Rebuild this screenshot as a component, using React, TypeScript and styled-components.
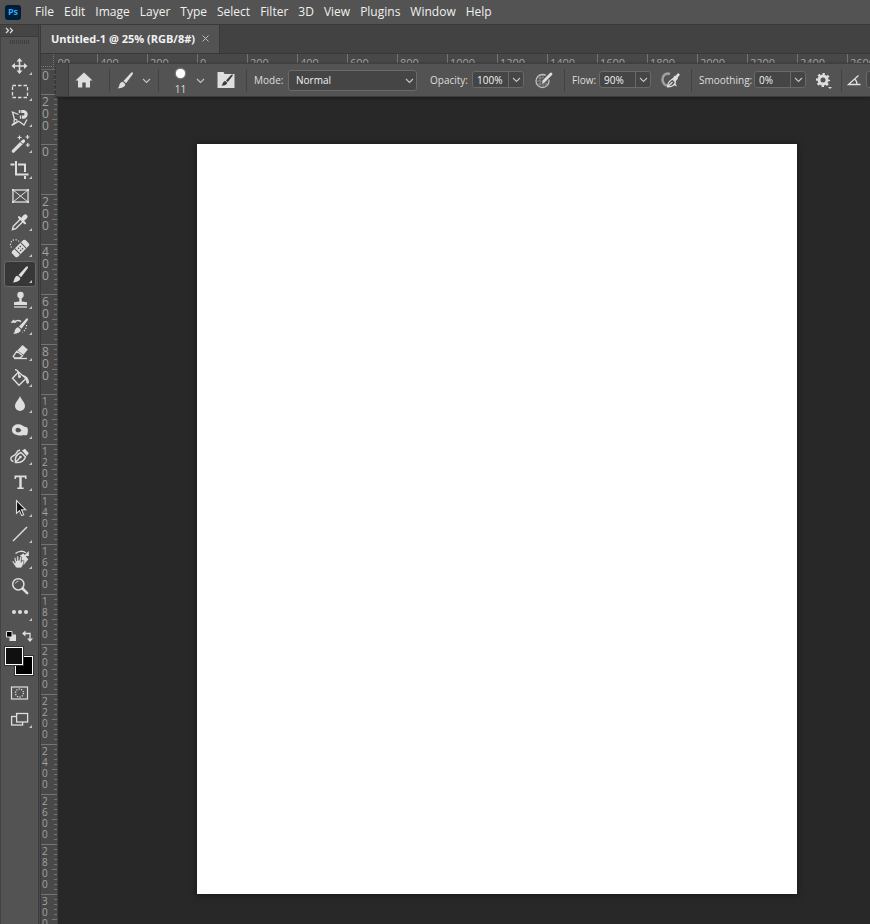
import React from "react";
import styled, { createGlobalStyle } from "styled-components";

const GlobalStyle = createGlobalStyle`
  *, *::before, *::after { box-sizing: border-box; }
  body {
    margin: 0;
    background: #282828;
    color: #e6e6e6;
    font-family: "Open Sans", "Noto Sans", sans-serif;
    font-size: 12px;
  }
  button, input, select { font: inherit; color: inherit; margin: 0; }
  button { background: none; border: 0; padding: 0; cursor: pointer; }
  svg { display: block; flex: none; }
`;

const Page = styled.div`
  display: flex;
  flex-direction: column;
  height: 100vh;
  overflow: hidden;
`;

/* ---------- menu bar ---------- */

const MenuBar = styled.header`
  display: flex;
  align-items: center;
  height: 25px;
  flex: none;
  padding-left: 5px;
  background: #535353;
  border-bottom: 1px solid #393939;
`;

const Logo = styled.span`
  width: 16px;
  height: 15px;
  margin-right: 9px;
  border-radius: 3px;
  background: #001e36;
  color: #31a8ff;
  font-size: 9px;
  line-height: 14px;
  font-weight: 700;
  text-align: center;
`;

const MenuList = styled.nav`
  display: flex;
`;

const MenuItem = styled.button`
  padding: 0 5px;
  line-height: 22px;
  color: #f0f0f0;
`;

/* ---------- frame ---------- */

const Body = styled.div`
  display: flex;
  flex: 1;
  min-height: 0;
`;

const ToolPanel = styled.aside`
  display: flex;
  flex-direction: column;
  flex: none;
  width: 39px;
  background: #535353;
  border-left: 1px solid #424242;
  border-right: 1px solid #3a3a3a;
`;

const PanelHeader = styled.button`
  height: 12px;
  flex: none;
  padding-left: 4px;
  background: #454545;
  border-bottom: 1px solid #3a3a3a;
`;

const Grip = styled.div`
  width: 20px;
  height: 4px;
  margin: 3px 0 9px 9px;
  flex: none;
  background: repeating-linear-gradient(90deg, #3f3f3f 0 1px, transparent 1px 2px);
`;

const ToolList = styled.div`
  display: flex;
  flex-direction: column;
  flex: none;
  padding-left: 3px;
`;

const ToolButton = styled.button<{ $active?: boolean; $flyout?: boolean }>`
  position: relative;
  display: flex;
  align-items: center;
  justify-content: center;
  width: 32px;
  height: 26px;
  border: 1px solid ${(p) => (p.$active ? "#686868" : "transparent")};
  border-radius: 3px;
  background: ${(p) => (p.$active ? "#373737" : "transparent")};
  color: #dedede;
  &::after {
    content: "";
    display: ${(p) => (p.$flyout ? "block" : "none")};
    position: absolute;
    right: 3px;
    bottom: 3px;
    border-left: 3px solid transparent;
    border-bottom: 3px solid #c4c4c4;
  }
`;

const ColorArea = styled.div`
  display: flex;
  flex-direction: column;
  padding: 3px 0 0 4px;
  color: #dedede;
`;

const ColorShortcuts = styled.div`
  display: flex;
  gap: 5px;
  height: 15px;
`;

const Swatches = styled.div`
  display: grid;
  grid-template-columns: 10px 8px 10px;
  grid-template-rows: 9px 9px 10px;
  margin-top: 4px;
`;

const Swatch = styled.button<{ $front?: boolean }>`
  grid-area: ${(p) => (p.$front ? "1 / 1 / 3 / 3" : "2 / 2 / 4 / 4")};
  z-index: ${(p) => (p.$front ? 1 : 0)};
  background: ${(p) => (p.$front ? "#0e110e" : "#000")};
  border: 1px solid #fff;
  outline: 1px solid #333;
`;

const ModeTools = styled(ToolList)`
  margin-top: 5px;
`;

const Gutter = styled.div`
  width: 2px;
  flex: none;
  background: #4a4a4a;
  border-right: 1px solid #3a3a3a;
`;

const Main = styled.main`
  display: flex;
  flex-direction: column;
  flex: 1;
  min-width: 0;
`;

const TabBar = styled.div`
  display: flex;
  height: 29px;
  flex: none;
  background: #424242;
  border-bottom: 1px solid #383838;
`;

const Tab = styled.div`
  display: flex;
  align-items: center;
  gap: 6px;
  padding: 0 9px 2px 10px;
  background: #535353;
  border-right: 1px solid #383838;
  color: #f2f2f2;
  font-size: 11px;
  font-weight: 700;
  white-space: nowrap;
`;

/* ---------- rulers ---------- */

const Workspace = styled.div`
  position: relative;
  display: grid;
  grid-template-columns: 17px minmax(0, 1fr);
  grid-template-rows: 16px minmax(0, 1fr);
  flex: 1;
  min-height: 0;
  background: #282828;
`;

const RulerCorner = styled.div`
  background:
    linear-gradient(#666, #666) 0 15px / 100% 1px no-repeat,
    repeating-linear-gradient(90deg, #777 0 1px, transparent 1px 2px) 0 12px / 100% 1px no-repeat,
    repeating-linear-gradient(#777 0 1px, transparent 1px 2px) 12px 0 / 1px 100% no-repeat,
    #484848;
`;

const TopRuler = styled.div`
  display: flex;
  overflow: hidden;
  background: #484848;
`;

const TopMark = styled.div<{ $first?: boolean }>`
  flex: none;
  display: flex;
  justify-content: ${(p) => (p.$first ? "flex-end" : "flex-start")};
  width: ${(p) => (p.$first ? 39 : 50)}px;
  padding-left: 2px;
  padding-right: ${(p) => (p.$first ? 27 : 0)}px;
  border-left: ${(p) => (p.$first ? 0 : 1)}px solid #747474;
  color: #a2a2a2;
  font-size: 11px;
  line-height: 17px;
`;

const SideRuler = styled.div`
  display: flex;
  flex-direction: column;
  overflow: hidden;
  background: #484848;
  border-right: 1px solid #404040;
`;

const SideMark = styled.div<{ $small?: boolean; $first?: boolean }>`
  flex: none;
  display: flex;
  flex-direction: column;
  justify-content: ${(p) => (p.$first ? "flex-end" : "flex-start")};
  height: ${(p) => (p.$first ? 24 : 50)}px;
  padding: ${(p) => (p.$first ? "0 0 12px 1px" : "2px 0 0 1px")};
  color: #a2a2a2;
  font-size: ${(p) => (p.$small ? 10 : 12)}px;
  line-height: ${(p) => (p.$small ? 11 : 12)}px;
  background:
    linear-gradient(#747474, #747474) 0 0 / ${(p) => (p.$first ? 0 : 100)}% 1px no-repeat,
    linear-gradient(#747474, #747474) 11px calc(100% - 24px) / 5px 1px no-repeat,
    repeating-linear-gradient(0deg, transparent 0 4px, #747474 4px 5px) 13px 100% / 3px 100% no-repeat;
`;

/* ---------- canvas ---------- */

const CanvasArea = styled.div`
  overflow: hidden;
  padding: 74px 73px 30px 139px;
`;

const Paper = styled.div`
  aspect-ratio: 4 / 5;
  background: #fff;
  box-shadow: 0 1px 6px 1px #1a1a1a;
`;

/* ---------- options bar, floats over the rulers ---------- */

const OptionsBar = styled.div`
  position: absolute;
  top: 9px;
  left: 15px;
  right: 0;
  display: flex;
  align-items: center;
  height: 34px;
  overflow: hidden;
  background: #535353;
  border-top: 1px solid #404040;
  border-bottom: 1px solid #3a3a3a;
  border-radius: 3px 0 0 3px;
  box-shadow: 0 1px 3px #1c1c1c;
  font-size: 10px;
  color: #dedede;
  & > * { flex: none; }
`;

const BarHandle = styled.div`
  width: 13px;
  height: 100%;
  background: #484848;
  border-right: 1px solid #3c3c3c;
`;

const Divider = styled.div`
  width: 1px;
  height: 23px;
  background: #424242;
`;

const BarButton = styled.button<{ $w: number }>`
  display: flex;
  align-items: center;
  justify-content: center;
  width: ${(p) => p.$w}px;
  height: 28px;
`;

const HomeButton = styled(BarButton)`
  margin-right: 10px;
`;

const BrushButton = styled(BarButton)`
  gap: 5px;
  padding-right: 4px;
`;

const BrushPreset = styled.button`
  display: flex;
  flex-direction: column;
  align-items: center;
  gap: 6px;
  width: 37px;
  padding: 3px 0 0 6px;
  line-height: 11px;
`;

const BrushDot = styled.span`
  width: 9px;
  height: 9px;
  border-radius: 50%;
  background: #fff;
  box-shadow: 0 0 2px #fff;
`;

const Label = styled.label<{ $w: number }>`
  width: ${(p) => p.$w}px;
  padding-left: 7px;
  white-space: nowrap;
`;

const SelectBox = styled.div`
  display: grid;
  align-items: center;
  width: 129px;
  height: 21px;
  margin-right: 6px;
  border: 1px solid #696969;
  border-radius: 3px;
  background: #454545;
  & > * { grid-area: 1 / 1; }
  & > svg { justify-self: end; margin-right: 2px; pointer-events: none; }
`;

const Select = styled.select`
  width: 100%;
  padding: 0 7px;
  appearance: none;
  border: 0;
  background: transparent;
  color: #f2f2f2;
`;

const Combo = styled.div`
  display: flex;
  width: 52px;
  height: 17px;
  margin-bottom: 1px;
  border: 1px solid #696969;
  border-radius: 3px;
  background: #454545;
`;

const ComboInput = styled.input`
  flex: 1;
  min-width: 0;
  padding: 0 0 0 4px;
  border: 0;
  background: transparent;
  color: #f5f5f5;
`;

const ComboArrow = styled.button`
  display: flex;
  align-items: center;
  justify-content: center;
  width: 15px;
  border-left: 1px solid #696969;
`;

/* ---------- icons ---------- */

const Icon = ({ children, size = 24, box = 24 }: { children: React.ReactNode; size?: number; box?: number }) => (
  <svg width={size} height={size} viewBox={`0 0 ${box} ${box}`} fill="none" stroke="none" aria-hidden="true">
    {children}
  </svg>
);

const Chevron = () => (
  <svg width="9" height="9" viewBox="0 0 9 9" fill="none" stroke="#c4c4c4" strokeWidth="1.1" aria-hidden="true">
    <path d="M1 3l3.500 3.500L8 3" />
  </svg>
);

const F = "currentColor";

const brushShape = (
  <>
    <path d="M19.600 4.400c.7.500.4 1.300-.2 2.300L13 15.200 10.500 13l7.400-8c.6-.7 1.200-1 1.700-.6z" fill={F} />
    <path d="M9.700 13.700l2.500 2.200c.2 2.600-2.700 4.400-7.700 4.300 1.700-.8 1.500-2 1.900-3.400.5-1.700 1.700-2.900 3.300-3.100z" fill={F} />
  </>
);

const icons: Record<string, React.ReactNode> = {
  move: (
    <>
      <path d="M11.500 6v12M5.500 12h12" stroke={F} strokeWidth="1.500" />
      <path d="M11.500 4l3 3.500h-6zM11.500 20l3-3.500h-6zM3.500 12L7 9v6zM19.500 12L16 9v6z" fill={F} />
    </>
  ),
  marquee: <rect x="4.500" y="5.500" width="15" height="12" stroke={F} strokeDasharray="3.500 2" strokeWidth="1.300" />,
  lasso: (
    <>
      <path d="M10.500 8.500L4.500 6l2.300 8.500M6.500 16.500L3.800 19.500l7-4.200 5.200 3.800 3-5.600" stroke={F} strokeWidth="1.300" />
      <circle cx="7.500" cy="15" r="1.600" stroke={F} strokeWidth="1.100" />
      <path d="M10.800 5.500h4.500a2.800 2.800 0 010 5.600h-3.500" stroke={F} strokeWidth="3.200" />
      <path d="M12.800 3.500v4M13.500 9v4" stroke="#535353" strokeWidth=".8" />
    </>
  ),
  wand: (
    <>
      <path d="M5.300 19.200l7.700-7.700" stroke={F} strokeWidth="3.200" strokeLinecap="round" />
      <path d="M13.200 11.300l2.300-2.300" stroke={F} strokeWidth="3.200" strokeLinecap="round" />
      <path d="M12.400 9.800l2.300 2.300" stroke="#535353" strokeWidth="1" />
      <path d="M11.500 3.500v4M9.500 5.500h4M19.500 3v4M17.500 5h4M19.800 11v4M17.800 13h4" stroke={F} strokeWidth="1.200" />
    </>
  ),
  crop: (
    <>
      <path d="M8 3v13.500h12.500" stroke={F} strokeWidth="2" />
      <path d="M2.500 6.500h4M10 6.500h7v7.500M17 18v3" stroke={F} strokeWidth="2" />
    </>
  ),
  frame: (
    <>
      <rect x="5" y="6" width="15" height="12" stroke={F} strokeWidth="1.300" />
      <path d="M5 6l15 12M20 6L5 18" stroke={F} />
      <path d="M4 5h2v2H4zM19 5h2v2h-2zM4 17h2v2H4zM19 17h2v2h-2z" fill={F} />
    </>
  ),
  eyedropper: (
    <>
      <path d="M12.500 9l-7 7c-.6.600-.4 1.600-1 3.500 2-.6 2.700-.4 3.400-1L15 11.500" stroke={F} strokeWidth="1.400" />
      <path d="M15 9l2.300-2.300" stroke={F} strokeWidth="4.500" strokeLinecap="round" />
      <path d="M11 7.200l6 6" stroke={F} strokeWidth="2.200" strokeLinecap="round" />
    </>
  ),
  healing: (
    <>
      <g transform="rotate(-45 12.500 12.500)">
        <rect x="3" y="8.500" width="19" height="8" rx="2" fill={F} />
        <path d="M8.200 8.500v8M16.800 8.500v8" stroke="#535353" />
        <path d="M10.500 11h4M10.500 14h4" stroke="#535353" strokeWidth="1.400" strokeDasharray="1.400 1.200" />
      </g>
      <path d="M3.500 11.500a4.500 4.500 0 017.500-6" stroke={F} strokeWidth="1.200" strokeDasharray="1.200 1.500" />
    </>
  ),
  brush: brushShape,
  stamp: (
    <>
      <circle cx="12.500" cy="7" r="3.200" fill={F} />
      <path d="M11.300 9h2.400v4.500l5.300.8V17H6v-2.700l5.300-.8z" fill={F} />
      <path d="M6 19h13" stroke={F} strokeWidth="1.300" />
    </>
  ),
  history: (
    <>
      <path d="M19.600 4.400c.7.500.4 1.300-.2 2.300L13.500 14.700 11 12.500l7-7.500c.5-.7 1.200-1 1.600-.6z" fill={F} />
      <path d="M10.200 13.200l2.500 2.200c.2 2.600-2.700 4.400-7.700 4.300 1.700-.8 1.500-2 1.900-3.400.5-1.700 1.700-2.900 3.300-3.100z" fill={F} />
      <path d="M6 8.500c1-2 4-2.500 7-1" stroke={F} strokeWidth="1.500" />
      <path d="M2.500 8.800h6L5.500 5.500z" fill={F} />
      <path d="M18.500 11c0 3-1.500 5.500-4 7.500" stroke={F} strokeWidth="1.200" strokeDasharray="1.200 1.600" />
    </>
  ),
  eraser: (
    <>
      <path d="M14.500 5l5.300 4.500-4.300 5.300-6.200-4.300z" fill={F} />
      <path d="M8.700 11.300l5.800 4.200-2.400 2.500H7l-1.800-1.500z" stroke={F} strokeWidth="1.300" />
      <path d="M6 18.500h13" stroke={F} strokeWidth="1.300" />
    </>
  ),
  bucket: (
    <>
      <path d="M10.500 6l7.500 6.500-7 6.800-6.500-7z" stroke={F} strokeWidth="1.400" />
      <path d="M7 3.800c2-.4 3.500 1.500 4 6.200" stroke={F} strokeWidth="1.300" />
      <circle cx="11.500" cy="10.500" r="1.500" fill={F} />
      <path d="M14.500 9c3.700.3 6.500 3.500 6.500 7.500 0 1.500-2.700 1.500-2.700 0 0-1.500-.3-2.500-1-3.500z" fill={F} />
    </>
  ),
  drop: <path d="M12 4c1.500 3.800 5 6.600 5 10a5 5 0 01-10 0c0-3.400 3.500-6.200 5-10z" fill={F} />,
  sponge: (
    <path
      fillRule="evenodd"
      d="M4 12c0-3.800 3-5.700 6.500-5.700 2.500 0 4 1.200 5.500 2.200l3.300 1c1 2.300.8 5.300-.3 7.500-1.200.5-2.300.2-3.300 0-2 .7-4 .7-6 .2C6.300 16.400 4 15 4 12zm3.500 0c0 1.500 1.200 2.400 2.500 2.400s2.300-1 3.500-2c-1-1.500-2.200-2.700-3.500-2.700S7.500 10.600 7.500 12z"
      fill={F}
    />
  ),
  pen: (
    <>
      <path d="M7.500 18.500c-.7-4.500 1.200-8.500 5.500-10l4.500 4.500c-1.500 4-5.300 6-10 5.500zM7.500 18.500l5-5.500" stroke={F} strokeWidth="1.400" />
      <circle cx="12.500" cy="13" r="1.300" fill={F} />
      <path d="M14 6.500l3-1.800 3.800 4.500-2 2.800z" fill={F} />
      <path d="M5.500 17.500c-3-.7-3.500-3.500-1.500-5 2-1.300 3.300-1 4.200-3.200.7-2 2.300-3 3.800-3.300" stroke={F} strokeWidth="1.400" />
    </>
  ),
  text: (
    <path d="M6.500 5.500h12v3.500h-1.300l-.5-1.700h-3v10.200h2v1.500H9.300v-1.500h2V7.300h-3L7.800 9H6.500z" fill={F} />
  ),
  arrow: <path d="M8.500 4.500v12.800l3-2.700 2.200 5 2-.9-2.200-4.900h4.200z" fill="#111" stroke={F} strokeWidth="1.100" />,
  line: <path d="M5 19L19 5" stroke={F} strokeWidth="1.400" />,
  hand: (
    <>
      <path d="M12 7.500l3.500-2 4.800 5.800-4.800 6z" fill={F} />
      <path
        d="M8.500 20c-1.500-1.500-3-4.200-4.500-6.500.3-1.200 1.500-.9 2 0l1.200 1.500L6 10c.2-1.200 1.500-1 1.800 0l.9 3V8.800c.2-1.200 1.700-1.200 1.900 0l.3 3.700 1-3.500c.4-1 1.700-.7 1.700.3l-.5 5 1.300-1.700c.8-.8 1.700-.3 1.500.8-.4 2.800-1 4.600-2.700 6.600z"
        fill={F}
        stroke="#535353"
        strokeWidth=".7"
      />
      <path d="M7.500 5.500c3-3 7.500-2.700 10.500-.7" stroke={F} strokeWidth="1.300" />
      <path d="M20.800 3v5h-5z" fill={F} />
    </>
  ),
  zoom: (
    <>
      <circle cx="10.300" cy="10.300" r="5.600" stroke={F} strokeWidth="1.500" />
      <path d="M14.500 14.500l4.700 4.700" stroke={F} strokeWidth="2.500" strokeLinecap="round" />
      <path d="M7.500 9.500a3 3 0 013-2.300" stroke={F} strokeWidth=".8" />
    </>
  ),
  dots: (
    <>
      <circle cx="6" cy="12" r="2" fill={F} />
      <circle cx="12" cy="12" r="2" fill={F} />
      <circle cx="18" cy="12" r="2" fill={F} />
    </>
  ),
  mask: (
    <>
      <rect x="3.500" y="6" width="16" height="12" stroke={F} strokeWidth="1.200" />
      <circle cx="11.500" cy="12" r="4" stroke={F} strokeWidth="1.300" strokeDasharray="1.200 1.300" />
    </>
  ),
  screen: (
    <>
      <rect x="3.600" y="9.500" width="11" height="8.500" stroke={F} strokeWidth="1.300" />
      <rect x="8.600" y="6.500" width="11" height="8.500" fill="#535353" stroke={F} strokeWidth="1.300" />
    </>
  ),
};

const tools: { id: string; label: string; flyout?: boolean }[] = [
  { id: "move", label: "Move", flyout: true },
  { id: "marquee", label: "Rectangular marquee", flyout: true },
  { id: "lasso", label: "Magnetic lasso", flyout: true },
  { id: "wand", label: "Magic wand", flyout: true },
  { id: "crop", label: "Crop", flyout: true },
  { id: "frame", label: "Frame" },
  { id: "eyedropper", label: "Eyedropper", flyout: true },
  { id: "healing", label: "Spot healing brush", flyout: true },
  { id: "brush", label: "Brush", flyout: true },
  { id: "stamp", label: "Clone stamp", flyout: true },
  { id: "history", label: "History brush", flyout: true },
  { id: "eraser", label: "Eraser", flyout: true },
  { id: "bucket", label: "Paint bucket", flyout: true },
  { id: "drop", label: "Blur", flyout: true },
  { id: "sponge", label: "Sponge", flyout: true },
  { id: "pen", label: "Curvature pen", flyout: true },
  { id: "text", label: "Type", flyout: true },
  { id: "arrow", label: "Path selection", flyout: true },
  { id: "line", label: "Line", flyout: true },
  { id: "hand", label: "Rotate view", flyout: true },
  { id: "zoom", label: "Zoom" },
  { id: "dots", label: "Edit toolbar", flyout: true },
];

const menus = ["File", "Edit", "Image", "Layer", "Type", "Select", "Filter", "3D", "View", "Plugins", "Window", "Help"];
const topMarks = [400, 200, 0, 200, 400, 600, 800, 1000, 1200, 1400, 1600, 1800, 2000, 2200, 2400, 2600];
const sideMarks = [200, 0, 200, 400, 600, 800, 1000, 1200, 1400, 1600, 1800, 2000, 2200, 2400, 2600, 2800, 3000];

const NumberCombo = ({ id, value }: { id: string; value: string }) => (
  <Combo>
    <ComboInput id={id} aria-label={id} defaultValue={value} />
    <ComboArrow aria-label={`${id} slider`}>
      <Chevron />
    </ComboArrow>
  </Combo>
);

const Tools = () => (
  <ToolPanel>
    <PanelHeader aria-label="Expand panel">
      <svg width="9" height="7" viewBox="0 0 9 7" fill="none" stroke="#e0e0e0" strokeWidth="1.200">
        <path d="M1 1l2.500 2.500L1 6M5 1l2.500 2.500L5 6" />
      </svg>
    </PanelHeader>
    <Grip />
    <ToolList>
      {tools.map((t) => (
        <ToolButton key={t.id} aria-label={t.label} $active={t.id === "brush"} $flyout={t.flyout}>
          <Icon>{icons[t.id]}</Icon>
        </ToolButton>
      ))}
    </ToolList>
    <ColorArea>
      <ColorShortcuts>
        <button aria-label="Default colors">
          <Icon size={12} box={12}>
            <path d="M4.500 4.500H11V11H4.500z" fill={F} />
            <path d="M1.500 1.500h5.500v5.500H1.500z" fill="#000" stroke={F} />
          </Icon>
        </button>
        <button aria-label="Swap colors">
          <Icon size={12} box={12}>
            <path d="M2.500 3.500h5.500v6" stroke={F} strokeWidth="1.300" />
            <path d="M0 3.500l3.500-3v6zM8 12L5 8.500h6z" fill={F} />
          </Icon>
        </button>
      </ColorShortcuts>
      <Swatches>
        <Swatch $front aria-label="Foreground color" />
        <Swatch aria-label="Background color" />
      </Swatches>
    </ColorArea>
    <ModeTools>
      <ToolButton aria-label="Quick mask">
        <Icon>{icons.mask}</Icon>
      </ToolButton>
      <ToolButton aria-label="Screen mode" $flyout>
        <Icon>{icons.screen}</Icon>
      </ToolButton>
    </ModeTools>
  </ToolPanel>
);

const Options = () => (
  <OptionsBar>
    <BarHandle />
    <HomeButton $w={30} aria-label="Home">
      <Icon size={18} box={18}>
        <path d="M9 1.500l8.500 8H15V16.500h-4.300V11.500H7.300v5H3V9.500H.5z" fill={F} />
      </Icon>
    </HomeButton>
    <Divider />
    <BrushButton $w={48} aria-label="Brush tool presets">
      <Icon>{brushShape}</Icon>
      <Chevron />
    </BrushButton>
    <Divider />
    <BrushPreset aria-label="Brush size">
      <BrushDot />
      11
    </BrushPreset>
    <BarButton $w={9} aria-label="Brush preset picker">
      <Chevron />
    </BarButton>
    <BarButton $w={41} aria-label="Brush settings">
      <Icon size={18} box={18}>
        <path d="M.5 1h6l1 2h10v14H.5z" fill={F} />
        <path d="M15.500 3.500c.5.300.3.900 0 1.500L10.800 11 9 9.500l5-5.500c.5-.5 1-.8 1.500-.5zM8.300 10l1.800 1.500c.2 2-2 3.200-6 3.100 2-.9 1.600-4.300 4.200-4.600z" fill="#3c3c3c" />
      </Icon>
    </BarButton>
    <Divider />
    <Label $w={41} htmlFor="mode">Mode:</Label>
    <SelectBox>
      <Select id="mode" defaultValue="Normal">
        <option>Normal</option>
        <option>Dissolve</option>
        <option>Multiply</option>
        <option>Screen</option>
      </Select>
      <Chevron />
    </SelectBox>
    <Label $w={49} htmlFor="opacity">Opacity:</Label>
    <NumberCombo id="opacity" value="100%" />
    <BarButton $w={40} aria-label="Pressure for opacity">
      <Icon size={20} box={20}>
        <circle cx="8.500" cy="11" r="6.500" stroke="#c0c0c0" strokeWidth="1.300" />
        <path d="M4 8h9M3 11h11M4 14h9M6 6v10M9 5v12M12 6v10" stroke="#969696" strokeWidth=".8" />
        <path d="M9 12l7.500-8" stroke="#535353" strokeWidth="5" />
        <path d="M10 11l7-7" stroke={F} strokeWidth="2.800" strokeLinecap="round" />
        <path d="M8 13.500l.8-3 2 2z" fill={F} />
      </Icon>
    </BarButton>
    <Divider />
    <Label $w={34} htmlFor="flow">Flow:</Label>
    <NumberCombo id="flow" value="90%" />
    <BarButton $w={40} aria-label="Airbrush">
      <Icon size={20} box={20}>
        <path d="M9 4C4 2.500 1.500 6 1.500 9.500S4 16 7 15.500" stroke="#a0a0a0" strokeWidth="2.600" />
        <path d="M6.500 17c0-3 1.500-6 5-8l3 3c-1 3-4 5-8 5zM6.500 17l5-5" stroke={F} strokeWidth="1.200" />
        <path d="M11.500 8.500l2.300-3 1 .3L17 3l2 1.700-2.300 2.800.3 1-2.500 3zM14 12.500l2 4-3.500-1.500z" fill={F} />
      </Icon>
    </BarButton>
    <Divider />
    <Label $w={62} htmlFor="smoothing">Smoothing:</Label>
    <NumberCombo id="smoothing" value="0%" />
    <BarButton $w={35} aria-label="Smoothing options">
      <Icon size={20} box={20}>
        <circle cx="9" cy="10" r="4" stroke={F} strokeWidth="3" />
        <circle cx="9" cy="10" r="6" stroke={F} strokeWidth="2.200" strokeDasharray="2.350 2.362" strokeDashoffset="1.200" />
        <path d="M14 17h4l-2 2z" fill={F} />
      </Icon>
    </BarButton>
    <Divider />
    <BarButton $w={24} aria-label="Brush angle">
      <Icon size={14} box={14}>
        <path d="M11.500 2.500L1.500 11.500h12M7.500 6c1.500 1 2.500 3 2.500 5.500" stroke={F} strokeWidth="1.300" />
      </Icon>
    </BarButton>
    <NumberCombo id="angle" value="" />
  </OptionsBar>
);

export default function App() {
  return (
    <Page>
      <GlobalStyle />
      <MenuBar>
        <Logo>Ps</Logo>
        <MenuList>
          {menus.map((m) => (
            <MenuItem key={m}>{m}</MenuItem>
          ))}
        </MenuList>
      </MenuBar>
      <Body>
        <Tools />
        <Gutter />
        <Main>
          <TabBar>
            <Tab>
              Untitled-1 @ 25% (RGB/8#)
              <button aria-label="Close document">
                <svg width="9" height="9" viewBox="0 0 9 9" stroke="#bdbdbd">
                  <path d="M1.500 1.500l6 6M7.500 1.500l-6 6" />
                </svg>
              </button>
            </Tab>
          </TabBar>
          <Workspace>
            <RulerCorner />
            <TopRuler>
              <TopMark $first>600</TopMark>
              {topMarks.map((n, i) => (
                <TopMark key={i}>{n}</TopMark>
              ))}
            </TopRuler>
            <SideRuler>
              <SideMark $first>0</SideMark>
              {sideMarks.map((n, i) => (
                <SideMark key={i} $small={n >= 1000}>
                  {String(n).split("").map((d, j) => (
                    <span key={j}>{d}</span>
                  ))}
                </SideMark>
              ))}
            </SideRuler>
            <CanvasArea>
              <Paper />
            </CanvasArea>
            <Options />
          </Workspace>
        </Main>
      </Body>
    </Page>
  );
}
